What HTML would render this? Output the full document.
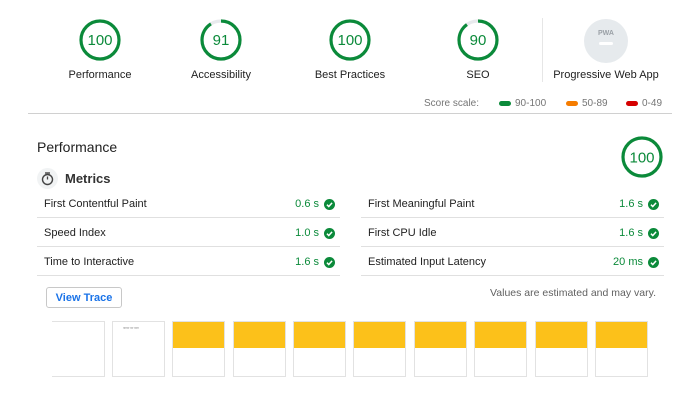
<!DOCTYPE html>
<html><head><meta charset="utf-8"><style>
body{margin:0;width:700px;height:407px;background:#fff;font-family:"Liberation Sans",Arial,sans-serif;color:#212121;position:relative;overflow:hidden}
.a{position:absolute}
.lbl{position:absolute;font-size:11px;text-align:center;width:140px;top:69px}
.num{font-size:15px;fill:#0b8a3a;font-family:"Liberation Sans",Arial,sans-serif}
.row{position:absolute;font-size:11px;height:29px;line-height:31px;border-bottom:1px solid #e0e0e0}
.row .v{position:absolute;right:21px;color:#0b8a3a}
.row .c{position:absolute;right:5px;top:10px;width:11px;height:11px}
.th{position:absolute;top:321px;width:53px;height:56px;border:1px solid #e2e2e2;box-sizing:border-box;background:#fff}
.th .y{height:26px;background:#fcc11a}
</style></head><body>
<svg class="a" style="left:0;top:0" width="700" height="130">
<g fill="none" stroke-width="3.2">
<circle cx="100" cy="40" r="19" stroke="#0b8a3a"/>
<circle cx="221" cy="40" r="19" stroke="#e8eaed"/>
<circle cx="221" cy="40" r="19" stroke="#0b8a3a" stroke-dasharray="108.6 200" transform="rotate(-90 221 40)"/>
<circle cx="350" cy="40" r="19" stroke="#0b8a3a"/>
<circle cx="478" cy="40" r="19" stroke="#e8eaed"/>
<circle cx="478" cy="40" r="19" stroke="#0b8a3a" stroke-dasharray="107.4 200" transform="rotate(-90 478 40)"/>
</g>
<text class="num" x="100" y="45" text-anchor="middle">100</text>
<text class="num" x="221" y="45" text-anchor="middle">91</text>
<text class="num" x="350" y="45" text-anchor="middle">100</text>
<text class="num" x="478" y="45" text-anchor="middle">90</text>
<circle cx="606" cy="41" r="22" fill="#e6eaed"/>
<text x="606" y="35" text-anchor="middle" font-size="7" fill="#9aa0a6" font-weight="bold" font-family="Liberation Sans">PWA</text>
<rect x="599" y="42" width="14" height="3" rx="1.5" fill="#fff"/>
<line x1="542.5" y1="18" x2="542.5" y2="82" stroke="#e6e6e6"/>
<line x1="28" y1="113.5" x2="672" y2="113.5" stroke="#d0d0d0"/>
<rect x="499" y="101" width="12" height="5" rx="2.5" fill="#0b8a3a"/>
<rect x="566" y="101" width="12" height="5" rx="2.5" fill="#f57c00"/>
<rect x="626" y="101" width="12" height="5" rx="2.5" fill="#d50000"/>
</svg>
<div class="lbl" style="left:30px">Performance</div>
<div class="lbl" style="left:151px">Accessibility</div>
<div class="lbl" style="left:280px">Best Practices</div>
<div class="lbl" style="left:408px">SEO</div>
<div class="lbl" style="left:536px">Progressive Web App</div>
<div class="a" style="top:98px;left:424px;font-size:10px;color:#757575">Score scale:</div>
<div class="a" style="top:98px;left:515px;font-size:10px;color:#757575">90-100</div>
<div class="a" style="top:98px;left:582px;font-size:10px;color:#757575">50-89</div>
<div class="a" style="top:98px;left:642px;font-size:10px;color:#757575">0-49</div>

<div class="a" style="left:37px;top:139px;font-size:14px">Performance</div>
<svg class="a" style="left:618px;top:133px" width="48" height="48"><circle cx="24" cy="24" r="19" fill="none" stroke="#0b8a3a" stroke-width="3.2"/><text class="num" x="24" y="29.5" text-anchor="middle" style="font-size:15px">100</text></svg>
<svg class="a" style="left:37px;top:168px" width="21" height="21"><circle cx="10.5" cy="10.5" r="10.5" fill="#f1f3f4"/><circle cx="10.5" cy="11.5" r="5" fill="none" stroke="#444" stroke-width="1.4"/><line x1="8" y1="5" x2="13" y2="5" stroke="#444" stroke-width="1.4"/><line x1="10.5" y1="11.5" x2="10.5" y2="8.5" stroke="#444" stroke-width="1.3"/></svg>
<div class="a" style="left:65px;top:171px;font-size:13px;font-weight:bold;color:#333">Metrics</div>

<div class="row" style="left:37px;top:189px;width:303px;padding-left:7px;box-sizing:border-box">First Contentful Paint<span class="v">0.6 s</span><svg class="c" viewBox="0 0 12 12"><circle cx="6" cy="6" r="6" fill="#0b8a3a"/><path d="M3.2 6.2l2 2 3.6-4" stroke="#fff" stroke-width="1.6" fill="none"/></svg></div>
<div class="row" style="left:37px;top:218px;width:303px;padding-left:7px;box-sizing:border-box">Speed Index<span class="v">1.0 s</span><svg class="c" viewBox="0 0 12 12"><circle cx="6" cy="6" r="6" fill="#0b8a3a"/><path d="M3.2 6.2l2 2 3.6-4" stroke="#fff" stroke-width="1.6" fill="none"/></svg></div>
<div class="row" style="left:37px;top:247px;width:303px;padding-left:7px;box-sizing:border-box">Time to Interactive<span class="v">1.6 s</span><svg class="c" viewBox="0 0 12 12"><circle cx="6" cy="6" r="6" fill="#0b8a3a"/><path d="M3.2 6.2l2 2 3.6-4" stroke="#fff" stroke-width="1.6" fill="none"/></svg></div>
<div class="row" style="left:361px;top:189px;width:303px;padding-left:7px;box-sizing:border-box">First Meaningful Paint<span class="v">1.6 s</span><svg class="c" viewBox="0 0 12 12"><circle cx="6" cy="6" r="6" fill="#0b8a3a"/><path d="M3.2 6.2l2 2 3.6-4" stroke="#fff" stroke-width="1.6" fill="none"/></svg></div>
<div class="row" style="left:361px;top:218px;width:303px;padding-left:7px;box-sizing:border-box">First CPU Idle<span class="v">1.6 s</span><svg class="c" viewBox="0 0 12 12"><circle cx="6" cy="6" r="6" fill="#0b8a3a"/><path d="M3.2 6.2l2 2 3.6-4" stroke="#fff" stroke-width="1.6" fill="none"/></svg></div>
<div class="row" style="left:361px;top:247px;width:303px;padding-left:7px;box-sizing:border-box">Estimated Input Latency<span class="v">20 ms</span><svg class="c" viewBox="0 0 12 12"><circle cx="6" cy="6" r="6" fill="#0b8a3a"/><path d="M3.2 6.2l2 2 3.6-4" stroke="#fff" stroke-width="1.6" fill="none"/></svg></div>

<div class="a" style="left:46px;top:287px;width:76px;height:21px;border:1px solid #c8c8c8;border-radius:3px;box-sizing:border-box;text-align:center;line-height:20px;font-size:11px;font-weight:bold;color:#1a73e8">View Trace</div>
<div class="a" style="right:44px;top:287px;font-size:10.5px;color:#616161">Values are estimated and may vary.</div>

<div class="th" style="left:52px;border-left:none"></div>
<div class="th" style="left:112px"><div style="font-size:3px;color:#999;padding:4px 0 0 10px">ffffffff ffff ffffff</div></div>
<div class="th" style="left:172px"><div class="y"></div></div>
<div class="th" style="left:233px"><div class="y"></div></div>
<div class="th" style="left:293px"><div class="y"></div></div>
<div class="th" style="left:353px"><div class="y"></div></div>
<div class="th" style="left:414px"><div class="y"></div></div>
<div class="th" style="left:474px"><div class="y"></div></div>
<div class="th" style="left:535px"><div class="y"></div></div>
<div class="th" style="left:595px"><div class="y"></div></div>
</body></html>
